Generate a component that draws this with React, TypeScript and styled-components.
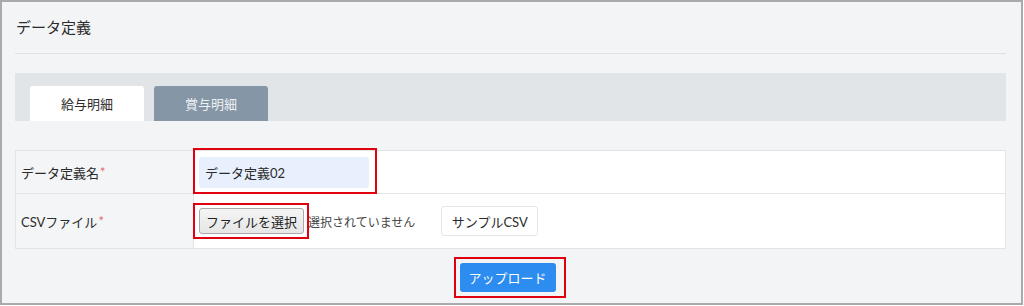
import React from 'react';
import styled, { createGlobalStyle } from 'styled-components';

const GlobalStyle = createGlobalStyle`
  html, body {
    margin: 0;
    padding: 0;
    background: #ffffff;
  }
  body {
    font-family: "Lato", "Noto Sans CJK JP", sans-serif;
    color: #333;
  }
  * {
    box-sizing: border-box;
  }
`;

const Frame = styled.div`
  width: 1023px;
  height: 305px;
  border: 2px solid #a9aaab;
  background: #f3f4f6;
  padding: 0 15px 0 13px;
`;

const Header = styled.div`
  height: 52px;
  display: flex;
  align-items: center;
  padding: 0 0 2px 1px;
  border-bottom: 1px solid #dfe2e5;
  font-size: 15px;
  color: #2b2b2b;
`;

const TabBar = styled.div`
  margin-top: 19px;
  height: 48px;
  background: #e1e5e8;
  display: flex;
  align-items: flex-end;
  gap: 10px;
  padding-left: 15px;
`;

const Tab = styled.div<{ $active?: boolean }>`
  width: 114px;
  height: 35px;
  display: flex;
  align-items: center;
  justify-content: center;
  font-size: 13px;
  border-radius: 3px 3px 0 0;
  background: ${p => (p.$active ? '#ffffff' : '#8596a6')};
  color: ${p => (p.$active ? '#2b2b2b' : '#eef1f4')};
`;

const Table = styled.div`
  margin-top: 29px;
  border: 1px solid #e2e4e6;
  background: #fff;
`;

const Row = styled.div<{ $h: number; $last?: boolean }>`
  display: flex;
  height: ${p => p.$h}px;
  border-bottom: ${p => (p.$last ? 'none' : '1px solid #e2e4e6')};
`;

const Label = styled.div`
  width: 178px;
  flex-shrink: 0;
  background: #f4f5f6;
  border-right: 1px solid #e2e4e6;
  display: flex;
  align-items: center;
  padding-left: 5px;
  font-size: 13px;
  color: #2b2b2b;
`;

const Required = styled.span`
  color: #e8646a;
  margin-left: 1px;
`;

const Cell = styled.div`
  flex: 1;
  display: flex;
  align-items: center;
  padding-left: 5px;
  font-size: 13px;
`;

const Marked = styled.div<{ $t: number; $r: number; $b: number; $l: number }>`
  position: relative;
  display: inline-flex;
  &::after {
    content: '';
    position: absolute;
    top: -${p => p.$t}px;
    right: -${p => p.$r}px;
    bottom: -${p => p.$b}px;
    left: -${p => p.$l}px;
    border: 2px solid #e0000f;
    pointer-events: none;
  }
`;

const TextInput = styled.div`
  width: 170px;
  height: 31px;
  background: #e8f0fe;
  border-radius: 3px;
  display: flex;
  align-items: center;
  padding-left: 6px;
  font-size: 13px;
  color: #2b2b2b;
`;

const FileButton = styled.div`
  height: 26px;
  padding: 0 6px;
  display: flex;
  align-items: center;
  font-size: 13px;
  color: #222;
  background: linear-gradient(#f4f4f4, #e6e6e6);
  border: 1px solid #a9a9a9;
  border-radius: 3px;
`;

const FileStatus = styled.span`
  margin-left: 4px;
  font-size: 12px;
  color: #444;
`;

const SampleButton = styled.div`
  margin-left: 26px;
  height: 30px;
  width: 97px;
  display: flex;
  align-items: center;
  justify-content: center;
  background: #fff;
  border: 1px solid #e4e6e8;
  border-radius: 3px;
  font-size: 13px;
  color: #2b2b2b;
`;

const Footer = styled.div`
  margin-top: 14px;
  display: flex;
  justify-content: center;
  padding-right: 6px;
`;

const UploadButton = styled.div`
  width: 96px;
  height: 29px;
  display: flex;
  align-items: center;
  justify-content: center;
  background: #2d8cf0;
  border-radius: 3px;
  color: #fff;
  font-size: 13px;
`;

const App: React.FC = () => {
  return (
    <>
      <GlobalStyle />
      <Frame>
        <Header>データ定義</Header>

        <TabBar>
          <Tab $active>給与明細</Tab>
          <Tab>賞与明細</Tab>
        </TabBar>

        <Table>
          <Row $h={43}>
            <Label>
              データ定義名<Required>*</Required>
            </Label>
            <Cell>
              <Marked $t={9} $r={8} $b={6} $l={6}>
                <TextInput>データ定義02</TextInput>
              </Marked>
            </Cell>
          </Row>
          <Row $h={54} $last>
            <Label>
              CSVファイル<Required>*</Required>
            </Label>
            <Cell>
              <Marked $t={5} $r={5} $b={5} $l={6}>
                <FileButton>ファイルを選択</FileButton>
              </Marked>
              <FileStatus>選択されていません</FileStatus>
              <SampleButton>サンプルCSV</SampleButton>
            </Cell>
          </Row>
        </Table>

        <Footer>
          <Marked $t={6} $r={10} $b={6} $l={6}>
            <UploadButton>アップロード</UploadButton>
          </Marked>
        </Footer>
      </Frame>
    </>
  );
};

export default App;
